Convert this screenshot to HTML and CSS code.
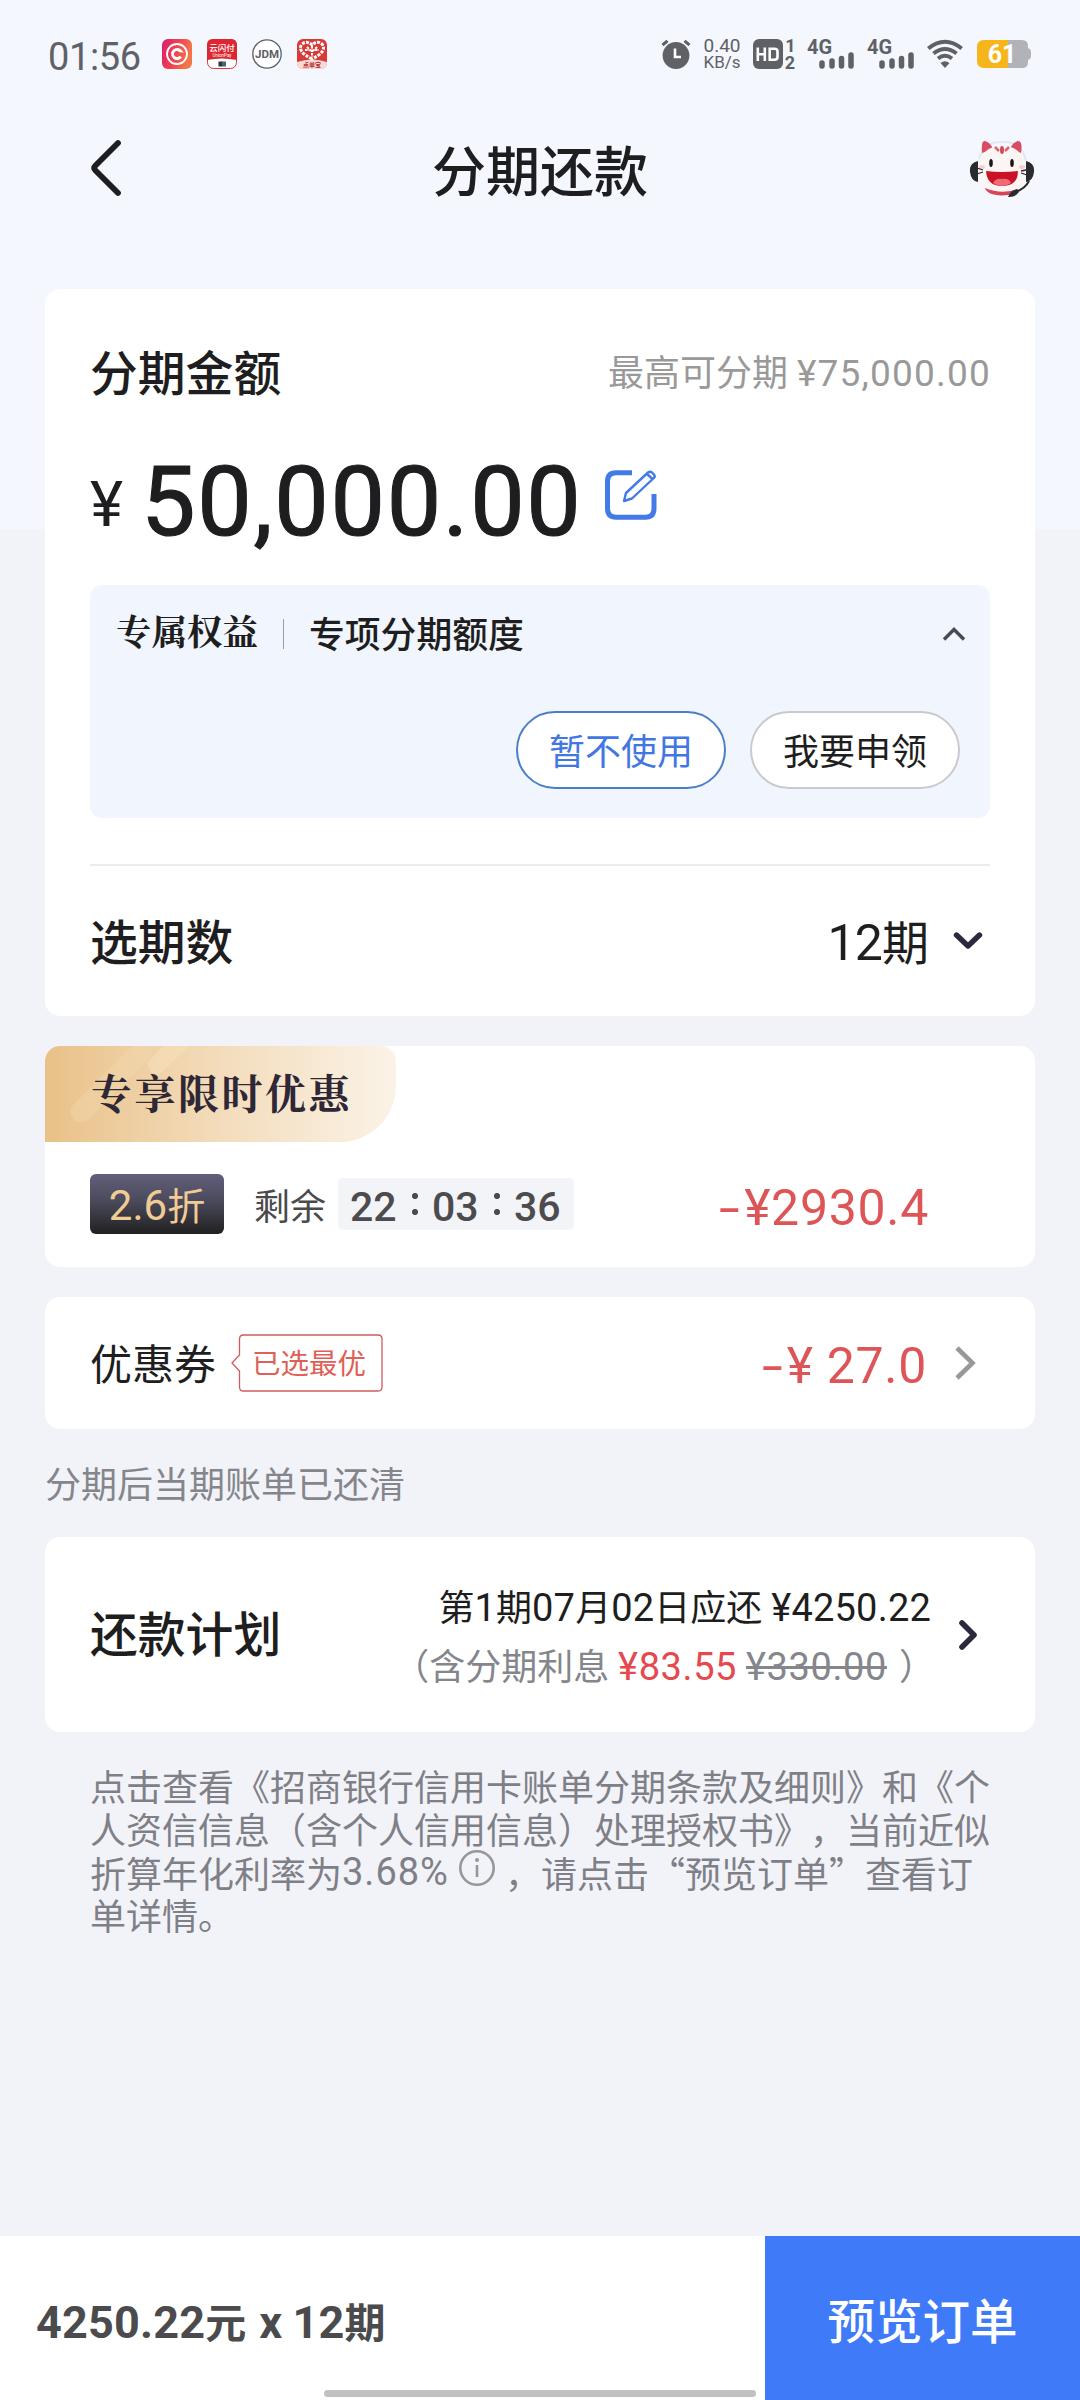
FILE: index.html
```html
<!DOCTYPE html>
<html lang="zh-CN">
<head>
<meta charset="utf-8">
<title>分期还款</title>
<link rel="stylesheet" href="styles.css">
</head>
<body>
<div class="screen">
  <div class="status">
    <span class="clock">01:56</span>
    <div class="apps">
      <svg width="30" height="30" viewBox="0 0 30 30">
        <defs><linearGradient id="ga" x1="0" y1="0" x2="1" y2=".3"><stop offset="0" stop-color="#d81f6c"/><stop offset=".5" stop-color="#ee3f52"/><stop offset="1" stop-color="#f4774a"/></linearGradient></defs>
        <rect width="30" height="30" rx="6" fill="url(#ga)"/>
        <circle cx="15" cy="15" r="10" fill="none" stroke="#fff" stroke-width="1.8"/>
        <path d="M20 11.6A6 6 0 1 0 20 18.4L17.4 16.7A3 3 0 1 1 17.4 13.3L22 13.4" fill="#fff"/>
      </svg>
      <svg width="30" height="30" viewBox="0 0 30 30">
        <rect x=".5" y=".5" width="29" height="29" rx="6" fill="#fff" stroke="#e0323a"/>
        <path d="M0 21V6Q0 0 6 0H24Q30 0 30 6V21Q15 18 0 21Z" fill="#de2630"/>
        <text x="15" y="11.500" class="app-cn">云闪付</text>
        <text x="15" y="17.500" class="app-en">UnionPay</text>
        <rect x="11.5" y="22.500" width="4" height="5" fill="#333"/><rect x="15" y="22.500" width="4" height="5" fill="#50636c"/>
      </svg>
      <svg width="30" height="30" viewBox="0 0 30 30">
        <circle cx="15" cy="15" r="14.200" fill="#fff" stroke="#5d6066" stroke-width="1.300"/>
        <text x="15" y="19.200" class="app-jdm">JDM</text>
      </svg>
      <svg width="30" height="30" viewBox="0 0 30 30">
        <rect width="30" height="30" rx="6" fill="#d83a35"/>
        <path d="M15 20C5 15 1 10 5 5Q10 1 15 6Q20 1 25 5C29 10 25 15 15 20Z" fill="none" stroke="#fff" stroke-width="3" stroke-dasharray="3 1.200"/>
        <path d="M15 7V18M10 8L14 12M20 8L16 12M8 11H12M18 11H22" stroke="#fff" stroke-width="2" stroke-dasharray="2.500 1"/>
        <path d="M0 23Q15 18 30 23V24Q30 30 24 30H6Q0 30 0 24Z" fill="#f8d9d5"/>
        <text x="15" y="28" class="app-cat">点单宝</text>
      </svg>
    </div>
    <div class="signals">
      <svg class="alarm" width="30" height="30" viewBox="0 0 30 30">
        <circle cx="15" cy="16.500" r="13.400" fill="#5f6166"/>
        <path d="M1.500 6L6.500 1.800M28.500 6L23.500 1.800" stroke="#5f6166" stroke-width="3"/>
        <path d="M14 9.500V18H20" fill="none" stroke="#fff" stroke-width="2.600"/>
      </svg>
      <div class="speed"><span>0.40</span><span class="unit">KB/s</span></div>
      <svg class="hd" width="44" height="30" viewBox="0 0 44 30">
        <rect width="30" height="30" rx="6" fill="#5f6166"/>
        <path d="M4.800 8.500V22M11.800 8.500V22M4.800 15.300H11.800" stroke="#fff" stroke-width="2.600"/>
        <path d="M16.700 9.800H21.500Q24.500 9.800 24.500 12.500V18Q24.500 20.700 21.500 20.700H16.700Z" fill="none" stroke="#fff" stroke-width="2.600"/>
        <text x="37.500" y="12.500" class="sim">1</text><text x="37" y="29.500" class="sim">2</text>
      </svg>
      <svg class="cell" width="48" height="30" viewBox="0 0 48 30">
        <text x="0" y="14.500" class="g4">4G</text>
        <path d="M15 24V27M25 22V27M34.500 19.500V27M44 16V27" stroke="#5f6166" stroke-width="5.500" stroke-linecap="round"/>
      </svg>
      <svg class="cell" width="48" height="30" viewBox="0 0 48 30">
        <text x="0" y="14.500" class="g4">4G</text>
        <path d="M15 24V27M25 22V27M34.500 19.500V27M44 16V27" stroke="#5f6166" stroke-width="5.500" stroke-linecap="round"/>
      </svg>
      <svg class="wifi" width="36" height="30" viewBox="0 0 36 30">
        <path d="M1.300 9.500Q18 -4 34.700 9.500M6.500 14.500Q18 5.500 29.500 14.500M11 19.500Q18 14 25 19.500" fill="none" stroke="#5f6166" stroke-width="4"/>
        <path d="M13.500 24Q18 20.500 22.500 24L18 29Z" fill="#5f6166"/>
      </svg>
      <svg class="battery" width="55" height="28" viewBox="0 0 55 28">
        <path d="M31 0H45Q51 0 51 6V8Q54 9 54 12V16Q54 19 51 20V22Q51 28 45 28H31Z" fill="#b1b3b8"/>
        <path d="M31 0H7Q0 0 0 7V21Q0 28 7 28H31Z" fill="#f7b51c"/>
        <text x="25" y="23" class="level">61</text>
      </svg>
    </div>
  </div>

  <div class="nav">
    <svg class="back" width="36" height="58" viewBox="0 0 36 58"><path d="M30 4L7.500 26.500Q5 29 7.500 31.500L30 54" fill="none" stroke="#1e1e20" stroke-width="5.800" stroke-linecap="round"/></svg>
    <h1>分期还款</h1>
    <svg class="cat" width="68" height="60" viewBox="0 0 68 60">
      <path d="M11 20Q16 2 34 3Q54 2 58 22" fill="none" stroke="#e3e7ee" stroke-width="2"/>
      <path d="M14 14Q13 1 17 2Q22 3 25 10ZM53 14Q55 2 50 2Q45 3 42 10Z" fill="#d94c62"/>
      <path d="M34 7C54 7 58 22 58 34C58 48 50 57 34 57C18 57 10 48 10 34C10 22 14 7 34 7Z" fill="#fbf5f3"/>
      <path d="M17 49Q34 56 50 50Q48 56 34 56.500Q19 56 17 49Z" fill="#d34759"/>
      <path d="M27 8L31 12M41 8L37 12" stroke="#dc6374" stroke-width="2.500"/><ellipse cx="34" cy="11" rx="2" ry="4" fill="#d2495b"/>
      <ellipse cx="23" cy="24" rx="1.800" ry="4" fill="#1d1818"/><ellipse cx="44" cy="24" rx="1.800" ry="4" fill="#1d1818"/>
      <ellipse cx="14" cy="28" rx="3" ry="2" fill="#f9cdd1"/><ellipse cx="54" cy="28" rx="3" ry="2" fill="#f9cdd1"/>
      <path d="M18 32Q34 34 50 32Q50 47 34 47Q19 47 18 32Z" fill="#cb1328"/>
      <path d="M25 44Q28 39 34 40Q41 39 43 44Q34 50 25 44Z" fill="#ef6c76"/>
      <path d="M10 22Q1 24 2 33Q3 42 10 43ZM58 22Q67 24 66 33Q65 42 58 43Z" fill="#292b2f"/>
      <path d="M9 29L15 31M9 35L15 33M58 31L53 32M59 36L53 34" stroke="#292b2f" stroke-width="1.300"/>
      <path d="M61 42Q57 50 47 53" fill="none" stroke="#292b2f" stroke-width="2"/>
      <path d="M40 58Q42 52 49 50L51 53Q47 58 41 58Z" fill="#292b2f"/>
    </svg>
  </div>

  <main>
    <section class="card amount-card">
      <div class="row head">
        <h2>分期金额</h2>
        <span class="max">最高可分期 <span class="num">¥75,000.00</span></span>
      </div>
      <div class="amount">
        <span class="yen">¥</span><span class="value">50,000.00</span>
        <svg width="52" height="50" viewBox="0 0 52 50">
          <path d="M27 2.800H11Q2.500 2.800 2.500 11.500V38.500Q2.500 47.200 11 47.200H40.500Q49 47.200 49 38.500V24" fill="none" stroke="#427be6" stroke-width="5"/>
          <path d="M19 31L21 23L43 2.500Q45 .8 47 2.500L49 4.500Q50.500 6.500 48.800 8L27 28.500Z" fill="#fff" stroke="#427be6" stroke-width="2.400" stroke-linejoin="round"/>
          <path d="M42 4L48 9.500" stroke="#427be6" stroke-width="2.400"/>
        </svg>
      </div>
      <div class="benefit">
        <div class="benefit-head">
          <span class="serif">专属权益</span><i></i><span class="name">专项分期额度</span>
          <svg width="24" height="16" viewBox="0 0 24 16"><path d="M2 13.500L12 3.500L22 13.500" fill="none" stroke="#4a4a50" stroke-width="3.400"/></svg>
        </div>
        <div class="buttons">
          <button class="pill primary">暂不使用</button>
          <button class="pill">我要申领</button>
        </div>
      </div>
      <div class="row term">
        <h2>选期数</h2>
        <span class="term-value"><span class="num">12</span>期</span>
        <svg width="30" height="20" viewBox="0 0 30 20"><path d="M3.500 4L15 15L26.500 4" fill="none" stroke="#2b2a3c" stroke-width="5.400" stroke-linecap="round" stroke-linejoin="round"/></svg>
      </div>
    </section>

    <section class="card promo">
      <div class="ribbon">
        <svg width="351" height="96" viewBox="0 0 351 96"><path d="M36 66L96 6" stroke="#f3d9ae" stroke-opacity=".4" stroke-width="21" stroke-linecap="round"/><path d="M112 19L140 -9" stroke="#f7e2c0" stroke-opacity=".5" stroke-width="18" stroke-linecap="round"/></svg>
        <span class="serif">专享限时优惠</span>
      </div>
      <div class="promo-row">
        <span class="discount"><span class="num">2.6</span>折</span>
        <span class="left">剩余</span>
        <span class="timer"><b>22</b><i></i><b>03</b><i></i><b>36</b></span>
        <span class="minus"><span class="dash">-</span>¥2930.4</span>
      </div>
    </section>

    <section class="card coupon">
      <span class="label">优惠券</span>
      <span class="tag">
        <svg width="152" height="58" viewBox="0 0 152 58"><path d="M8.500 21V5Q8.500 1 12.500 1H147Q151 1 151 5V53Q151 57 147 57H12.500Q8.500 57 8.500 53V37L1 29Z" fill="#fff" stroke="#d2595d" stroke-width="1.300"/></svg>
        <span>已选最优</span>
      </span>
      <span class="minus"><span class="dash">-</span>¥ 27.0</span>
      <svg class="arrow" width="22" height="36" viewBox="0 0 22 36"><path d="M3 3L18.500 18L3 33" fill="none" stroke="#98989a" stroke-width="4.600"/></svg>
    </section>

    <p class="note">分期后当期账单已还清</p>

    <section class="card plan">
      <h2>还款计划</h2>
      <div class="detail">
        <div class="due">第<span class="num">1</span>期<span class="num">07</span>月<span class="num">02</span>日应还 <span class="num">¥4250.22</span></div>
        <div class="interest">（含分期利息 <span class="num red">¥83.55</span> <s class="num">¥330.00</s><span class="close">）</span></div>
      </div>
      <svg class="arrow" width="22" height="32" viewBox="0 0 22 32"><path d="M5 4L17 16L5 28" fill="none" stroke="#2b2a3c" stroke-width="5.600" stroke-linecap="round" stroke-linejoin="round"/></svg>
    </section>

    <div class="terms">
      <div>点击查看《招商银行信用卡账单分期条款及细则》和《个</div>
      <div>人资信信息（含个人信用信息）处理授权书》，当前近似</div>
      <div class="third">折算年化利率为<span class="num">3.68%</span><svg width="38" height="38" viewBox="0 0 38 38"><circle cx="19" cy="19" r="16.700" fill="none" stroke="#96979b" stroke-width="2.600"/><circle cx="19" cy="11" r="2" fill="#96979b"/><path d="M19 16V28" stroke="#96979b" stroke-width="2.600"/></svg>，请点击“预览订单”查看订</div>
      <div>单详情。</div>
    </div>
  </main>

  <footer>
    <div class="total"><span class="num">4250.22</span>元<span class="num times">x</span><span class="num">12</span>期</div>
    <button class="submit">预览订单</button>
    <div class="handle"></div>
  </footer>
</div>
</body>
</html>
```
FILE: styles.css
```css
* { box-sizing: border-box; margin: 0; padding: 0; }
body {
  font-family: Roboto, "Noto Sans CJK SC", sans-serif;
  color: #1e1e20;
  background: #f2f3f8;
}
svg { display: block; flex: none; overflow: visible; }
button { font-family: inherit; }
.screen {
  width: 1080px;
  height: 2400px;
  display: flex;
  flex-direction: column;
  background: linear-gradient(#f4f7fe 529px, #f2f3f8 529px);
  overflow: hidden;
  white-space: nowrap;
}

/* status bar */
.status { height: 108px; display: flex; align-items: center; padding: 0 48px 0 48px; color: #5f6166; }
.clock { font-size: 38px; width: 114px; letter-spacing: -.4px; line-height: 1; padding-top: 5px; }
.apps { display: flex; gap: 15px; }
.app-cn { font: 500 8.5px "Noto Sans CJK SC", sans-serif; fill: #fff; text-anchor: middle; }
.app-en { font: 4.5px Roboto, sans-serif; fill: #fff; text-anchor: middle; }
.app-jdm { font: bold 11.5px Roboto, sans-serif; fill: #5d6066; text-anchor: middle; }
.app-cat { font: bold 6px "Noto Sans CJK SC", sans-serif; fill: #b3322e; text-anchor: middle; }
.signals { margin-left: auto; display: flex; align-items: center; }
.alarm { margin-right: 12px; }
.speed { display: flex; flex-direction: column; align-items: center; width: 38px; font-size: 19px; line-height: 17px; margin-right: 12px; }
.speed .unit { font-size: 17px; }
.hd { margin-right: 10px; }
.cell { margin-right: 12px; }
.sim { font: bold 18px Roboto, sans-serif; fill: #5f6166; text-anchor: middle; }
.g4 { font: bold 20px Roboto, sans-serif; fill: #5f6166; }
.wifi { margin-right: 14px; }
.level { font: bold 25px Roboto, sans-serif; fill: #fff; text-anchor: middle; }

/* title bar */
.nav { height: 181px; display: grid; grid-template-columns: 160px 1fr 160px; padding: 30px 44px 0; align-items: start; }
.back { margin: 1px 0 0 44px; }
.nav h1 { font-size: 54px; font-weight: 500; line-height: 64px; text-align: center; padding-top: 4px; }
.cat { justify-self: end; margin-top: 1px; }

main { flex: 1; padding: 0 45px; display: flex; flex-direction: column; }
.card { background: #fff; border-radius: 15px; flex: none; }
h2 { font-size: 47.800px; font-weight: 500; line-height: 60px; padding-top: 3px; }
.row { display: flex; align-items: center; }

.amount-card { height: 727px; padding: 54px 45px 0; }
.head { height: 60px; justify-content: space-between; }
.max { font-size: 36px; color: #999; margin-top: -7px; }
.max .num { font-size: 37px; letter-spacing: 1.200px; margin-right: -1px; }
.amount { height: 182px; display: flex; align-items: baseline; padding-top: 41px; }
.yen { font-size: 63px; width: 51px; position: relative; top: -9px; }
.value { font-size: 97px; line-height: 117px; font-weight: 400; -webkit-text-stroke: 1.200px #1e1e20; letter-spacing: 1.700px; width: 464px; }
.amount svg { position: relative; top: -15px; }
.benefit { height: 233px; background: #f1f5fd; border-radius: 12px; padding: 23px 30px 0 26px; }
.benefit-head { display: flex; align-items: center; height: 52px; }
.serif { font-family: "Noto Serif CJK SC", "Noto Sans CJK SC", serif; font-weight: 700; }
.benefit-head .serif { font-size: 35.500px; line-height: 48px; margin-top: -8px; }
.benefit-head i { width: 1px; height: 30px; background: #9a9da6; margin: 0 25px; }
.benefit-head .name { font-size: 35.800px; font-weight: 500; flex: 1; margin-top: -5px; }
.benefit-head svg { margin-right: -6px; }
.buttons { display: flex; justify-content: flex-end; gap: 24px; margin-top: 51px; }
.pill { width: 210px; height: 78px; border-radius: 39px; border: 2px solid #c9cace; background: #fff; font-size: 36px; color: #1e1e20; padding-bottom: 2px; }
.pill.primary { border-color: #4a7fc8; color: #4277e2; }
.term { margin-top: 46px; border-top: 2px solid #ececef; height: 153px; padding-right: 7px; }
.term h2 { padding-top: 5px; }
.term-value { margin-left: auto; font-size: 47px; margin-top: -5px; }
.term-value .num { font-size: 50px; letter-spacing: -.8px; }
.term svg { margin-left: 24px; margin-top: -2px; }

.promo { margin-top: 30px; height: 221px; overflow: hidden; }
.ribbon { width: 351px; height: 96px; border-radius: 0 15px 56px 0; background: linear-gradient(90deg, #e9c188, #f3dcbb 50%, #fbf3e7); display: grid; overflow: hidden; }
.ribbon > * { grid-area: 1 / 1; }
.ribbon svg { overflow: hidden; }
.ribbon .serif { font-size: 41px; letter-spacing: 2.500px; line-height: 92px; padding-left: 46px; color: #2e2736; }
.promo-row { display: flex; align-items: center; height: 124px; padding: 0 106px 0 45px; }
.discount { width: 134px; height: 60px; border-radius: 6px; background: linear-gradient(#625f7b, #4b4a5b 45%, #202021); color: #f0cc94; font-size: 38px; line-height: 64px; text-align: center; }
.discount .num { font-size: 42px; }
.left { font-size: 36px; color: #4a4a4c; margin-left: 30px; width: 84px; }
.timer { width: 236px; height: 52px; border-radius: 5px; background: #f3f4f8; display: flex; align-items: center; padding-left: 12px; color: #4c4c4e; }
.timer b { font-size: 41px; font-weight: 500; width: 48px; line-height: 52px; padding-top: 5px; }
.timer i { width: 6px; height: 22px; margin: 0 14px; background: radial-gradient(circle at 3px 3px, #4c4c4e 2.800px, transparent 3.200px) 0 0 / 6px 16px; }
.minus { margin-left: auto; color: #de5558; font-size: 50px; letter-spacing: .7px; padding-top: 7px; }
.dash { display: inline-block; width: 25px; transform: scaleX(1.5); transform-origin: 0 50%; }

.coupon { margin-top: 30px; height: 132px; display: flex; align-items: center; padding: 0 59px 0 45px; }
.coupon .label { font-size: 42px; width: 141px; margin-top: -3px; }
.coupon .minus { padding-top: 5px; }
.tag { display: grid; align-items: center; }
.tag > * { grid-area: 1 / 1; }
.tag span { font-size: 28.500px; color: #de6058; padding-left: 21px; line-height: 58px; padding-top: 3px; }
.coupon .arrow { margin-left: 27px; }

.note { font-size: 36px; line-height: 44px; color: #85868c; margin-top: 35px; }
.plan { margin-top: 29px; height: 195px; display: flex; align-items: center; padding: 0 56px 0 45px; }
.detail { margin-left: auto; font-size: 36px; line-height: 58px; display: grid; padding-top: 6px; }
.detail .num { font-size: 38px; letter-spacing: .2px; }
.due { text-align: right; }
.interest { color: #85868c; text-align: right; margin-right: -4px; }
.interest .num { letter-spacing: .6px; }
.close { margin-left: 12px; }
.red { color: #e5494d; }
.plan .arrow { margin-left: 26px; }

.terms { margin: 32px 0 0 45px; font-size: 36px; color: #7f8087; font-family: "Noto Sans CJK SC", sans-serif; text-spacing-trim: space-all; }
.terms div { height: 43px; line-height: 43px; display: flex; align-items: center; }
.terms .third { padding-top: 2px; }
.terms .num { font-family: Roboto, sans-serif; font-size: 38px; letter-spacing: 1px; }
.terms svg { margin: -9px 9px 0 9px; }

footer { height: 164px; flex: none; background: #fff; display: flex; position: relative; }
.total { flex: 1; padding-left: 36px; font-size: 41px; font-weight: 700; color: #4b4b4d; line-height: 173px; }
.total .num { font-size: 45px; letter-spacing: .2px; }
.total .times { margin: 0 10px 0 13px; }
.submit { width: 315px; border: 0; background: #3f7bf8; color: #fff; font-size: 47.500px; font-weight: 500; padding-top: 1px; }
.handle { position: absolute; left: 324px; top: 154px; width: 432px; height: 7px; border-radius: 4px; background: #c1c1c3; }
```
